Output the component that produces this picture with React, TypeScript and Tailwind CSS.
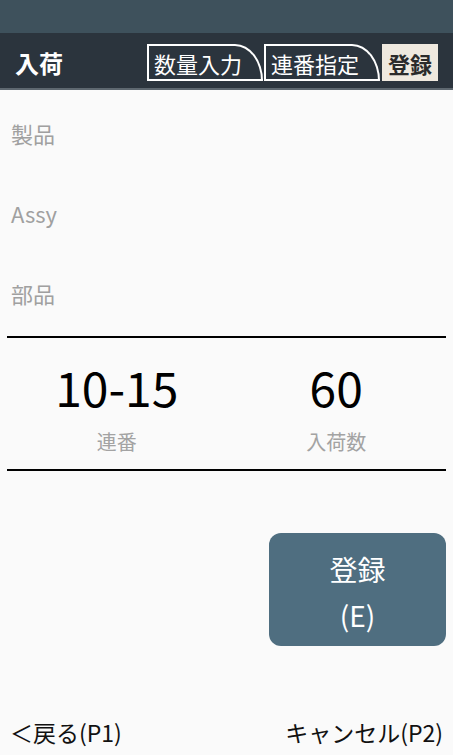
const font = "font-['Noto_Sans_CJK_JP','Noto_Sans',sans-serif]";

function Tab({ label }: { label: string }) {
  return (
    <div className="flex h-[37px] w-[116px] items-center rounded-tr-[28px_37px] border-2 border-white pl-[5px] text-[22px] leading-none text-white">
      {label}
    </div>
  );
}

function Stat({ value, label }: { value: string; label: string }) {
  return (
    <div className="flex flex-col items-center">
      <span className="text-[48px] leading-[56px] font-normal text-black">{value}</span>
      <span className="mt-[14px] text-[20px] leading-[28px] text-[#a3a3a3]">{label}</span>
    </div>
  );
}

export default function App() {
  return (
    <div className={`${font} flex h-[755px] w-[453px] flex-col overflow-hidden bg-[#fafafa]`}>
      <div className="h-[33px] bg-[#3e515c]" />

      <header className="flex h-[57px] items-start border-b-2 border-[#5e6870] bg-[#2b343d] pl-[15px] pt-[11px]">
        <h1 className="mr-auto mt-[4px] text-[24px] leading-[30px] font-bold text-white">入荷</h1>
        <div className="mr-[15px] flex gap-px">
          <Tab label="数量入力" />
          <Tab label="連番指定" />
          <div className="ml-px flex h-[37px] w-[56px] items-center justify-center bg-[#efe9df] text-[22px] leading-none font-bold text-[#2b2b2b]">
            登録
          </div>
        </div>
      </header>

      <main className="flex flex-1 flex-col px-[7px]">
        <div className="pt-[3px]">
          {["製品", "Assy", "部品"].map((label) => (
            <div key={label} className="flex h-20 items-center pl-[4px] text-[22px] leading-[30px] text-[#a0a0a0]">
              {label}
            </div>
          ))}
        </div>

        <div className="mt-[3px] grid grid-cols-2 border-y-2 border-black pt-[20px] pb-[13px]">
          <Stat value="10-15" label="連番" />
          <Stat value="60" label="入荷数" />
        </div>

        <div className="mt-[62px] flex justify-end">
          <button
            type="button"
            className="flex h-[113px] w-[177px] flex-col items-center justify-center rounded-[12px] bg-[#4f6e80] pt-[4px] text-[28px] leading-[46px] text-white"
          >
            <span>登録</span>
            <span>(E)</span>
          </button>
        </div>

        <footer className="mt-auto flex items-center justify-between pb-[8px] pl-[3px] pr-[3px] text-[23px] leading-[30px] text-[#111]">
          <span>＜戻る(P1)</span>
          <span>キャンセル(P2)</span>
        </footer>
      </main>
    </div>
  );
}
